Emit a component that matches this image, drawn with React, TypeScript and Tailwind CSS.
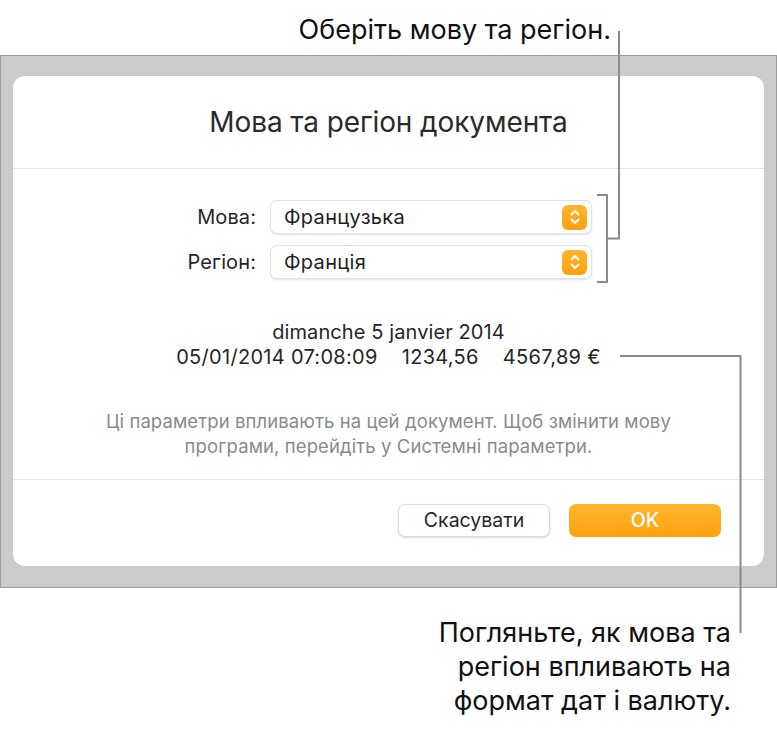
import React from "react";

const font = { fontFamily: "Inter, 'Noto Sans', sans-serif" };

function Stepper() {
  return (
    <div className="flex h-[25px] w-[25px] items-center justify-center rounded-[6px] bg-gradient-to-b from-[#ffb52e] to-[#ff9f0a]">
      <svg width="12" height="18" viewBox="0 0 12 18" fill="none" stroke="white" strokeWidth="2" strokeLinecap="round" strokeLinejoin="round">
        <path d="M2.5 6.5 L6 3 L9.5 6.5" />
        <path d="M2.5 11.5 L6 15 L9.5 11.5" />
      </svg>
    </div>
  );
}

function SelectRow({ label, value }: { label: string; value: string }) {
  return (
    <div className="flex items-center">
      <span className="w-[243px] text-right text-[20px] tracking-[0.1px] text-[#262626]">{label}</span>
      <div className="ml-[14px] flex h-[34px] w-[322px] items-center justify-between rounded-[7px] border border-[#e2e2e2] bg-white pl-[13px] pr-[4px] shadow-[0_1px_2px_rgba(0,0,0,0.12)]">
        <span className="text-[20px] tracking-[0.3px] text-[#1f1f1f]">{value}</span>
        <Stepper />
      </div>
    </div>
  );
}

export default function App() {
  return (
    <div className="relative h-[729px] w-[777px] overflow-hidden bg-white text-[#1a1a1a]" style={font}>
      <div className="flex h-[55px] items-start justify-end pr-[166px] pt-[14px]">
        <span className="text-[27px] leading-[32px] text-[#111]">Оберіть мову та регіон.</span>
      </div>

      <div className="h-[533px] border border-[#9c9c9c] bg-[#cbcbcb] px-[12px] pt-[20px]">
        <div className="flex h-[490px] flex-col rounded-[12px] bg-white">
          <div className="flex h-[93px] items-center justify-center border-b border-[#e6e6e6]">
            <span className="text-[28px] tracking-[-0.1px] text-[#2a2a2a]">Мова та регіон документа</span>
          </div>

          <div className="flex flex-col gap-[11px] pt-[31px]">
            <SelectRow label="Мова:" value="Французька" />
            <SelectRow label="Регіон:" value="Франція" />
          </div>

          <div className="mt-[41px] flex flex-col items-center text-[20px] leading-[25px] tracking-[0.1px] text-[#262626]">
            <span>dimanche 5 janvier 2014</span>
            <div className="flex gap-[24px] tracking-[0.3px]">
              <span>05/01/2014 07:08:09</span>
              <span>1234,56</span>
              <span>4567,89 €</span>
            </div>
          </div>

          <div className="mt-[39px] flex flex-col items-center text-[18.5px] leading-[25px] tracking-[0.1px] text-[#8a8a8a]">
            <span>Ці параметри впливають на цей документ. Щоб змінити мову</span>
            <span>програми, перейдіть у Системні параметри.</span>
          </div>

          <div className="mt-[20px] flex flex-1 items-start justify-end gap-[19px] border-t border-[#e6e6e6] pr-[43px] pt-[24px]">
            <button className="h-[33px] w-[152px] rounded-[7px] border border-[#dcdcdc] bg-white text-[19.5px] text-[#262626] shadow-[0_1px_2px_rgba(0,0,0,0.15)]">
              Скасувати
            </button>
            <button className="h-[33px] w-[152px] rounded-[7px] bg-gradient-to-b from-[#ffb62c] to-[#ffa20b] text-[19.5px] font-medium text-white">
              OK
            </button>
          </div>
        </div>
      </div>

      <div className="flex flex-col items-end pr-[46px] pt-[28px] text-[27px] leading-[34px] text-[#111]">
        <span>Погляньте, як мова та</span>
        <span>регіон впливають на</span>
        <span>формат дат і валюту.</span>
      </div>

      <svg className="pointer-events-none absolute left-0 top-0" width="777" height="729" fill="none" stroke="#8a8a8a" strokeWidth="2">
        <path d="M597 195 H607 V282 H597" />
        <path d="M607 238.5 H619 V31" />
        <path d="M620 356 H740.5 V633" />
      </svg>
    </div>
  );
}
